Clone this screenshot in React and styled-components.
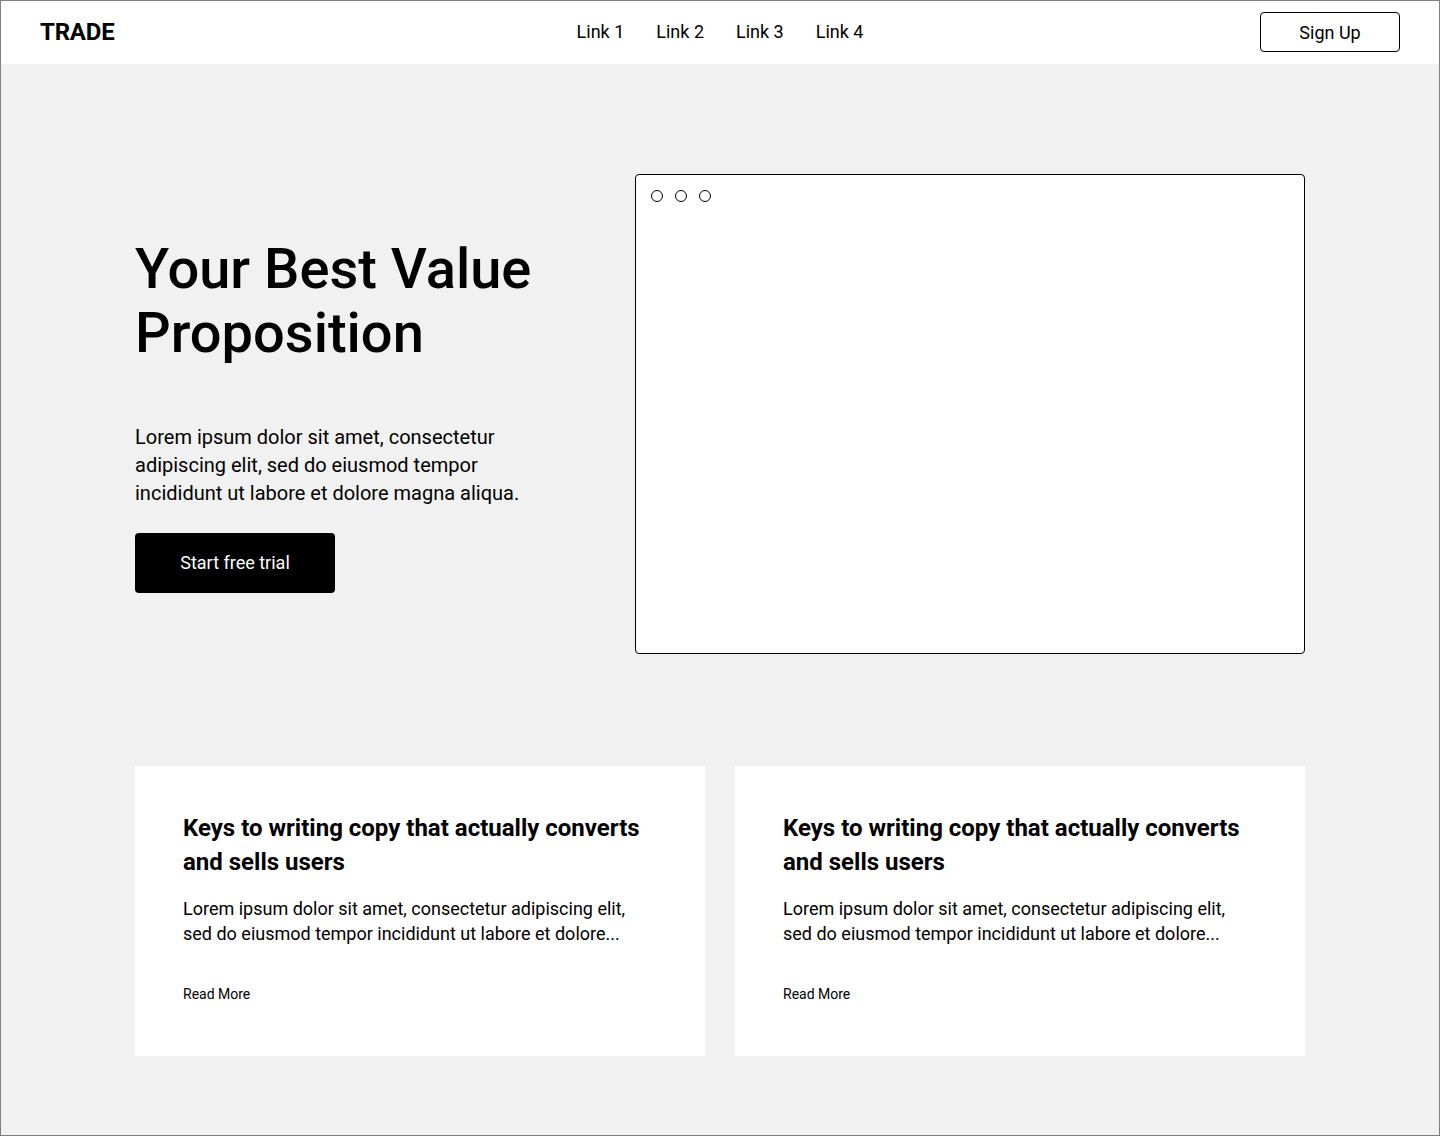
import React from "react";
import styled, { createGlobalStyle } from "styled-components";

const GlobalStyle = createGlobalStyle`
  * { box-sizing: border-box; }
  body {
    margin: 0;
    font-family: Roboto, "Liberation Sans", sans-serif;
    color: #000;
  }
`;

const Page = styled.div`
  min-height: 1136px;
  border: 1px solid #7f7f7f;
  background: #f1f1f1;
`;

const Header = styled.header`
  display: grid;
  grid-template-columns: 1fr auto 1fr;
  align-items: center;
  height: 63px;
  padding: 0 39px 2px;
  background: #fff;
`;

const Logo = styled.div`
  font-size: 24px;
  font-weight: 700;
  letter-spacing: -0.2px;
`;

const Nav = styled.nav`
  display: flex;
  gap: 32px;
`;

const NavLink = styled.a`
  font-size: 18px;
  color: #000;
  text-decoration: none;
`;

const SignUp = styled.button`
  justify-self: end;
  width: 140px;
  height: 40px;
  margin-top: 1px;
  border: 1px solid #000;
  border-radius: 4px;
  background: #fff;
  font-family: inherit;
  font-size: 18px;
  color: #000;
`;

const Main = styled.main`
  width: 1170px;
  margin: 0 auto;
  padding: 110px 0 79px;
`;

const Hero = styled.section`
  display: grid;
  grid-template-columns: 500px 670px;
  align-items: center;
`;

const HeroText = styled.div`
  display: flex;
  flex-direction: column;
  align-items: flex-start;
  padding-top: 1px;
`;

const Title = styled.h1`
  margin: 0;
  font-size: 56px;
  line-height: 64px;
  font-weight: 500;
`;

const Lead = styled.p`
  margin: 58px 0 0;
  width: 400px;
  font-size: 20px;
  line-height: 28px;
`;

const TrialButton = styled.button`
  margin-top: 26px;
  width: 200px;
  height: 60px;
  border: none;
  border-radius: 4px;
  background: #000;
  color: #fff;
  font-family: inherit;
  font-size: 18px;
`;

const Window = styled.div`
  height: 480px;
  border: 1px solid #000;
  border-radius: 4px;
  background: #fff;
  padding: 15px;
`;

const Dots = styled.div`
  display: flex;
  gap: 12px;
`;

const Dot = styled.span`
  width: 12px;
  height: 12px;
  border: 1px solid #000;
  border-radius: 50%;
`;

const Cards = styled.section`
  display: grid;
  grid-template-columns: 1fr 1fr;
  gap: 30px;
  margin-top: 112px;
`;

const Card = styled.article`
  height: 290px;
  background: #fff;
  padding: 45px 48px 0;
`;

const CardTitle = styled.h2`
  margin: 0;
  font-size: 24px;
  line-height: 34px;
  font-weight: 700;
`;

const CardText = styled.p`
  margin: 17px 0 0;
  font-size: 18px;
  line-height: 25px;
`;

const ReadMore = styled.a`
  display: block;
  margin-top: 38px;
  font-size: 14px;
  line-height: 20px;
  color: #000;
  text-decoration: none;
`;

const posts = [1, 2];

export default function App() {
  return (
    <Page>
      <GlobalStyle />
      <Header>
        <Logo>TRADE</Logo>
        <Nav>
          <NavLink href="#">Link 1</NavLink>
          <NavLink href="#">Link 2</NavLink>
          <NavLink href="#">Link 3</NavLink>
          <NavLink href="#">Link 4</NavLink>
        </Nav>
        <SignUp>Sign Up</SignUp>
      </Header>
      <Main>
        <Hero>
          <HeroText>
            <Title>
              Your Best Value
              <br />
              Proposition
            </Title>
            <Lead>
              Lorem ipsum dolor sit amet, consectetur adipiscing elit, sed do
              eiusmod tempor incididunt ut labore et dolore magna aliqua.
            </Lead>
            <TrialButton>Start free trial</TrialButton>
          </HeroText>
          <Window>
            <Dots>
              <Dot />
              <Dot />
              <Dot />
            </Dots>
          </Window>
        </Hero>
        <Cards>
          {posts.map((p) => (
            <Card key={p}>
              <CardTitle>Keys to writing copy that actually converts and sells users</CardTitle>
              <CardText>
                Lorem ipsum dolor sit amet, consectetur adipiscing elit, sed do
                eiusmod tempor incididunt ut labore et dolore...
              </CardText>
              <ReadMore href="#">Read More</ReadMore>
            </Card>
          ))}
        </Cards>
      </Main>
    </Page>
  );
}
